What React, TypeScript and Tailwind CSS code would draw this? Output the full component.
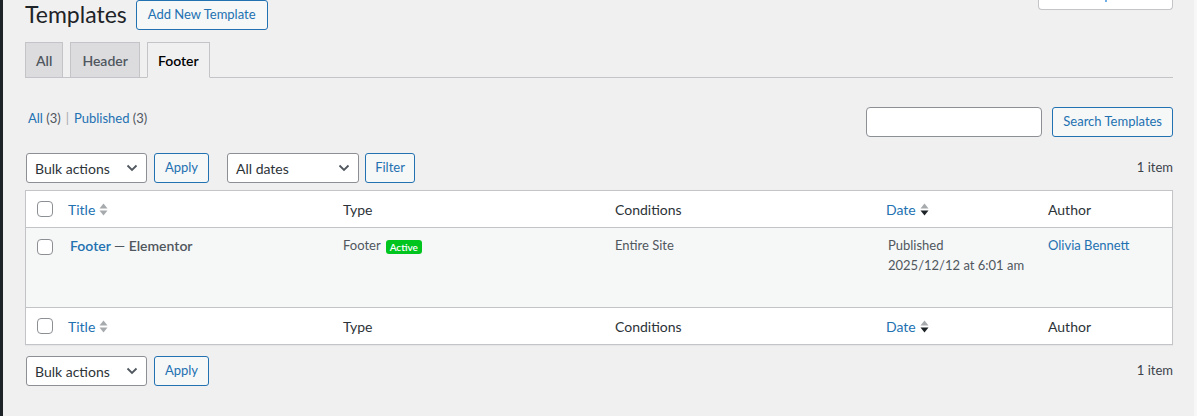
import React from "react";

function Checkbox() {
  return <span className="block w-4 h-4 rounded-[4px] border border-[#8c8f94] bg-white" />;
}

function Sort({ active }: { active?: boolean }) {
  return (
    <svg width="9" height="15" viewBox="0 0 9 15" className="ml-[4px]">
      <path d="M0.5 6.5 L4.5 1.5 L8.5 6.5 Z" fill="#a7aaad" />
      <path d="M0.5 8.5 L4.5 13.5 L8.5 8.5 Z" fill={active ? "#1d2327" : "#a7aaad"} />
    </svg>
  );
}

function Chevron() {
  return (
    <svg width="12" height="8" viewBox="0 0 12 8">
      <path d="M1.5 1.5 L6 6 L10.5 1.5" fill="none" stroke="#50575e" strokeWidth="1.8" />
    </svg>
  );
}

function Select({ label, className }: { label: string; className: string }) {
  return (
    <div
      className={
        "h-[30px] flex items-center justify-between pl-[8px] pr-[8px] bg-white border border-[#8c8f94] rounded-[3px] text-[14px] text-[#2c3338] " +
        className
      }
    >
      <span>{label}</span>
      <Chevron />
    </div>
  );
}

function Btn({ children, className = "" }: { children: React.ReactNode; className?: string }) {
  return (
    <div
      className={
        "h-[30px] flex items-center justify-center px-[10px] whitespace-nowrap bg-[#f6f7f7] border border-[#2271b1] rounded-[3px] text-[13px] text-[#2271b1] " +
        className
      }
    >
      {children}
    </div>
  );
}

const cols = "grid grid-cols-[32px_275px_272px_271px_162px_1fr]";

function HeadRow({ border }: { border: "top" | "bottom" }) {
  return (
    <div
      className={
        cols +
        " items-center text-[14px] text-[#2c3338] " +
        (border === "bottom" ? "h-[37px] border-b border-[#c3c4c7]" : "h-[36px]")
      }
    >
      <div className="pl-[11px]">
        <Checkbox />
      </div>
      <div className="pl-[10px] flex items-center text-[#2271b1]">
        Title
        <Sort />
      </div>
      <div className="pl-[10px]">Type</div>
      <div className="pl-[10px]">Conditions</div>
      <div className="pl-[10px] flex items-center text-[#2271b1]">
        Date
        <Sort active />
      </div>
      <div className="pl-[10px]">Author</div>
    </div>
  );
}

export default function App() {
  return (
    <div className="min-h-[416px] bg-[#f0f0f1] flex font-['Lato','Liberation_Sans',sans-serif]">
      <div className="w-[3px] shrink-0 bg-[#1d2327]" />
      <main className="flex-1 pl-[22px] pr-[21px]">
        <div className="flex items-start justify-between">
          <div className="flex items-start">
            <h1 className="text-[23px] leading-[30px] -mt-[1px] text-[#1d2327] font-normal">Templates</h1>
            <Btn className="ml-[9px] px-[11px]">Add New Template</Btn>
          </div>
          <div className="w-[135px] h-[10px] bg-white border-x border-b border-[#c3c4c7] rounded-b-[4px] flex justify-center">
            <span className="w-[2px] h-[2px] bg-[#72aee6]" />
          </div>
        </div>

        <div className="mt-[12px] flex items-end gap-[7px] border-b border-[#c3c4c7] h-[36px]">
          <div className="h-[36px] -mb-px px-[10px] flex items-center border border-[#c3c4c7] bg-[#dcdcde] text-[14px] font-semibold text-[#50575e]">
            All
          </div>
          <div className="h-[36px] -mb-px px-[11px] flex items-center border border-[#c3c4c7] bg-[#dcdcde] text-[14px] font-semibold text-[#50575e]">
            Header
          </div>
          <div className="h-[36px] -mb-px px-[10px] flex items-center border border-[#c3c4c7] border-b-[#f0f0f1] bg-[#f0f0f1] text-[14px] font-semibold text-black">
            Footer
          </div>
        </div>

        <div className="mt-[29px] flex items-start justify-between">
          <div className="-mt-[2px] pl-[3px] leading-[26px] text-[13px] text-[#50575e]">
            <span className="text-[#2271b1]">All</span> (3)
            <span className="mx-[5px] text-[#a7aaad]">|</span>
            <span className="text-[#2271b1]">Published</span> (3)
          </div>
          <div className="flex items-center gap-[10px]">
            <div className="w-[176px] h-[30px] bg-white border border-[#8c8f94] rounded-[4px]" />
            <Btn>Search Templates</Btn>
          </div>
        </div>

        <div className="mt-[16px] flex items-center justify-between">
          <div className="flex items-center pl-[1px]">
            <Select label="Bulk actions" className="w-[121px]" />
            <Btn className="ml-[7px] w-[55px]">Apply</Btn>
            <Select label="All dates" className="ml-[18px] w-[132px]" />
            <Btn className="ml-[6px] w-[50px]">Filter</Btn>
          </div>
          <span className="text-[13px] text-[#3c434a]">1 item</span>
        </div>

        <div className="mt-[7px] bg-white border border-[#c3c4c7] shadow-[0_1px_1px_rgba(0,0,0,0.04)]">
          <HeadRow border="bottom" />
          <div className={cols + " h-[80px] bg-[#f6f7f7] border-b border-[#c3c4c7] text-[13px] leading-[19.5px] text-[#50575e]"}>
            <div className="pl-[11px] pt-[11px]">
              <Checkbox />
            </div>
            <div className="pl-[12px] pt-[8px] text-[14px] font-semibold">
              <span className="text-[#2271b1]">Footer</span> — Elementor
            </div>
            <div className="pl-[10px] pt-[8px] flex items-start">
              <span>Footer</span>
              <span className="ml-[5px] mt-[4px] h-[14px] px-[4px] rounded-[3px] bg-[#00c51f] text-white text-[10px] leading-[14px] font-semibold">
                Active
              </span>
            </div>
            <div className="pl-[10px] pt-[8px]">Entire Site</div>
            <div className="pl-[12px] pt-[8px]">
              <div>Published</div>
              <div>2025/12/12 at 6:01 am</div>
            </div>
            <div className="pl-[10px] pt-[8px] text-[#2271b1]">Olivia Bennett</div>
          </div>
          <HeadRow border="top" />
        </div>

        <div className="mt-[11px] flex items-center justify-between">
          <div className="flex items-center pl-[1px]">
            <Select label="Bulk actions" className="w-[121px]" />
            <Btn className="ml-[7px] w-[55px]">Apply</Btn>
          </div>
          <span className="text-[13px] text-[#3c434a]">1 item</span>
        </div>
      </main>
      <div className="w-[3px] shrink-0 bg-[#f7f7f7]" />
    </div>
  );
}
